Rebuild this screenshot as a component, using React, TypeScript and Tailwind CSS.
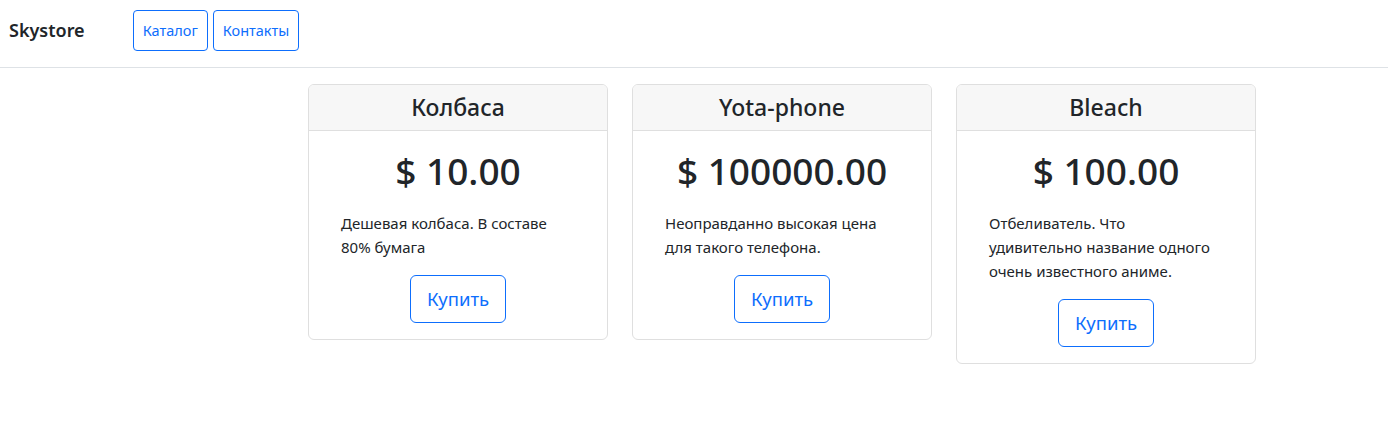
const products = [
  { name: 'Колбаса', price: '10.00', description: 'Дешевая колбаса. В составе 80% бумага' },
  { name: 'Yota-phone', price: '100000.00', description: 'Неоправданно высокая цена для такого телефона.' },
  { name: 'Bleach', price: '100.00', description: 'Отбеливатель. Что удивительно название одного очень известного аниме.' },
]

export default function App() {
  return (
    <div className="min-h-[438px] bg-white text-[#212529] font-['Noto_Sans',_sans-serif]">
      <header className="flex items-center border-b border-[#dee2e6] pl-[9px] pt-[9px] pb-[16px]">
        <span className="text-[18px] font-semibold leading-[42px]">Skystore</span>
        <nav className="ml-[48px] flex gap-[5px]">
          <a className="rounded border border-[#0d6efd] px-[9px] py-[9px] text-[14.5px] leading-[21px] text-[#0d6efd]">
            Каталог
          </a>
          <a className="rounded border border-[#0d6efd] px-[9px] py-[9px] text-[14.5px] leading-[21px] text-[#0d6efd]">
            Контакты
          </a>
        </nav>
      </header>

      <main className="flex items-start gap-6 pl-[308px] pt-4">
        {products.map((p) => (
          <div key={p.name} className="w-[300px] overflow-hidden rounded-md border border-[#dfdfdf] bg-white">
            <div className="border-b border-[#dfdfdf] bg-[#f7f7f7] px-4 py-2 text-center">
              <h4 className="text-[23px] font-medium leading-[29px]">{p.name}</h4>
            </div>
            <div className="p-4 text-center">
              <h1 className="text-[37px] font-medium leading-[48px]">$ {p.price}</h1>
              <p className="mt-4 mb-4 ml-4 w-[226px] text-left text-[15px] leading-6">{p.description}</p>
              <button className="h-12 rounded-md border border-[#0d6efd] px-4 text-[18.5px] leading-[30px] text-[#0d6efd]">
                Купить
              </button>
            </div>
          </div>
        ))}
      </main>
    </div>
  )
}
